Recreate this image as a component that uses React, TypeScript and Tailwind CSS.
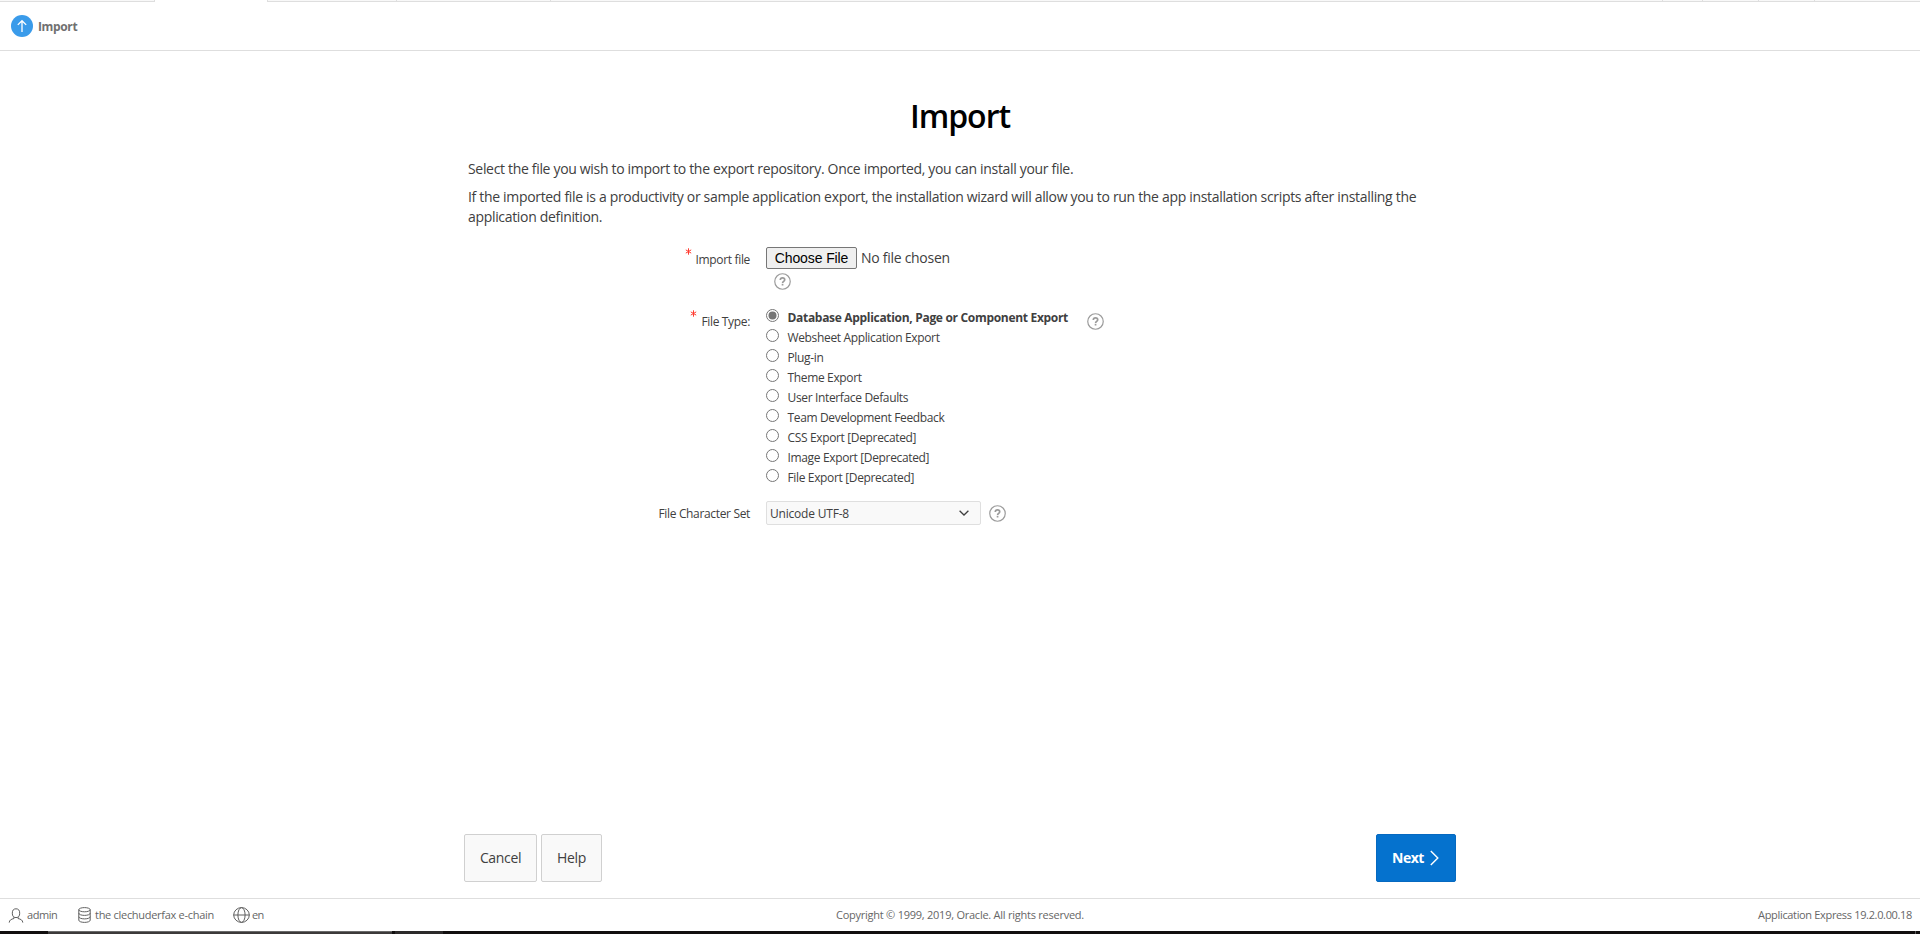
import { useState } from "react";

const FILE_TYPES = [
  "Database Application, Page or Component Export",
  "Websheet Application Export",
  "Plug-in",
  "Theme Export",
  "User Interface Defaults",
  "Team Development Feedback",
  "CSS Export [Deprecated]",
  "Image Export [Deprecated]",
  "File Export [Deprecated]",
];

function HelpIcon() {
  return (
    <svg width="17" height="17" viewBox="0 0 17 17" fill="none" className="block text-[#9b9b9b]">
      <circle cx="8.5" cy="8.5" r="7.75" stroke="currentColor" strokeWidth="1.2" />
      <path
        d="M6.3 7c0-1.3.9-2.1 2.2-2.1s2.2.8 2.2 1.9c0 1.5-2.1 1.6-2.1 3.1"
        stroke="currentColor"
        strokeWidth="1.7"
      />
      <rect x="7.7" y="10.8" width="1.7" height="1.7" fill="currentColor" />
    </svg>
  );
}

function Required() {
  return (
    <svg width="7" height="7" viewBox="0 0 7 7" className="block text-[#ff3b30]">
      <path d="M3.5 .3v6.4M.8 1.9l5.4 3.2M6.2 1.9L.8 5.1" stroke="currentColor" strokeWidth="1" />
    </svg>
  );
}

function Radio({ checked }: { checked: boolean }) {
  return (
    <svg width="13" height="13" viewBox="0 0 13 13" className="block">
      <circle cx="6.5" cy="6.5" r="6" fill="#fff" stroke="#767676" />
      {checked && <circle cx="6.5" cy="6.5" r="4" fill="#767676" />}
    </svg>
  );
}

function TabStrip() {
  return (
    <div className="flex h-[2px] shrink-0">
      <div className="w-[155px] border-r border-b border-[#dedede] bg-[#f8f8f8]" />
      <div className="w-[112px] bg-white" />
      <div className="w-[130px] border-r border-b border-l border-[#dedede] bg-[#f8f8f8]" />
      <div className="w-[154px] border-r border-b border-[#dedede] bg-[#f8f8f8]" />
      <div className="w-[1112px] border-r border-b border-[#dedede] bg-[#f8f8f8]" />
      <div className="w-[40px] border-r border-b border-[#dedede] bg-[#f8f8f8]" />
      <div className="w-[56px] border-r border-b border-[#dedede] bg-[#f8f8f8]" />
      <div className="w-[56px] border-r border-b border-[#dedede] bg-[#f8f8f8]" />
      <div className="flex-1 border-b border-[#dedede] bg-[#f8f8f8]" />
    </div>
  );
}

export default function App() {
  const [selected, setSelected] = useState(0);

  return (
    <div className="flex h-[934px] flex-col overflow-hidden bg-white font-['Open_Sans',sans-serif] text-[#404040]">
      <TabStrip />
      <header className="flex h-[49px] shrink-0 items-start border-b border-[#dedede] pl-[11px]">
        <svg width="22" height="22" viewBox="0 0 22 22" className="mt-[13px] block">
          <circle cx="11" cy="11" r="11" fill="#3a9bea" />
          <path d="M11 17V6M6.8 9.9L11 5.7l4.2 4.2" stroke="#fff" strokeWidth="1.3" fill="none" />
        </svg>
        <span className="mt-[15px] ml-[5px] text-xs leading-5 font-bold tracking-[-0.36px] text-[#707070]">
          Import
        </span>
      </header>

      <main className="mx-auto flex w-[992px] flex-1 flex-col pt-[45px]">
        <h1 className="text-center text-[32px] leading-10 font-semibold tracking-[-1px] text-black">Import</h1>
        <div className="mt-[23px] px-1 text-sm leading-5 tracking-[-0.323px]">
          <p>Select the file you wish to import to the export repository. Once imported, you can install your file.</p>
          <p className="mt-2">
            If the imported file is a productivity or sample application export, the installation wizard will allow you
            to run the app installation scripts after installing the application definition.
          </p>
        </div>

        <form className="mt-[20px] flex flex-col text-xs leading-5 tracking-[-0.34px]">
          <div className="flex h-[60px]">
            <div className="flex w-[286px] justify-end gap-[4px]">
              <span className="pt-[1px]">
                <Required />
              </span>
              <label className="pt-[3px]">Import file</label>
            </div>
            <div className="ml-[16px]">
              <div className="flex items-center gap-[4px]">
                <button
                  type="button"
                  className="h-[22px] w-[91px] rounded-[2px] border border-[#767676] bg-[#efefef] font-['Liberation_Sans',Arial,sans-serif] text-sm leading-5 tracking-[-0.1px] text-black"
                >
                  Choose File
                </button>
                <span className="text-sm leading-[22px] tracking-[-0.28px]">No file chosen</span>
              </div>
              <div className="mt-[4px] ml-[8px]">
                <HelpIcon />
              </div>
            </div>
          </div>

          <div className="flex h-[194px]">
            <div className="flex w-[286px] justify-end gap-[4px]">
              <span className="pt-[3px]">
                <Required />
              </span>
              <label className="pt-[5px]">File Type:</label>
            </div>
            <div className="ml-[16px]">
              {FILE_TYPES.map((name, i) => (
                <label key={name} className="flex h-5 items-start" onClick={() => setSelected(i)}>
                  <span className="mt-[2px]">
                    <Radio checked={i === selected} />
                  </span>
                  <span
                    className={
                      i === selected
                        ? "ml-[8.5px] leading-[22px] font-bold tracking-[-0.31px]"
                        : "ml-[8.5px] leading-[22px] tracking-[-0.35px]"
                    }
                  >
                    {name}
                  </span>
                </label>
              ))}
            </div>
            <div className="mt-[6px] ml-[19px]">
              <HelpIcon />
            </div>
          </div>

          <div className="flex h-6">
            <label className="w-[286px] pt-[3px] text-right">File Character Set</label>
            <div className="ml-[16px] flex w-[215px] items-center justify-between rounded-[2px] border border-[#dfdfdf] bg-[#f9f9f9] pr-[11px] pl-[3px]">
              <span className="pt-[2px] tracking-[-0.2px]">Unicode UTF-8</span>
              <svg width="10" height="6" viewBox="0 0 10 6" className="block">
                <path d="M.6 .7L5 5 9.4 .7" stroke="#404040" strokeWidth="1.3" fill="none" />
              </svg>
            </div>
            <div className="mt-[4px] ml-[8px]">
              <HelpIcon />
            </div>
          </div>
        </form>

        <div className="mt-auto mb-[16px] flex gap-1 text-sm leading-5">
          <button className="h-12 w-[73px] rounded-[2px] border border-[#d0d0d0] bg-[#f9f9f9] tracking-[-0.35px]">
            Cancel
          </button>
          <button className="h-12 w-[61px] rounded-[2px] border border-[#d0d0d0] bg-[#f9f9f9] tracking-[-0.35px]">
            Help
          </button>
          <button className="ml-auto flex h-12 w-[80px] items-center rounded-[2px] border border-[#0669c0] bg-[#0572ce] pl-[15px] font-bold tracking-[-0.5px] text-white">
            Next
            <svg width="9" height="16" viewBox="0 0 9 16" className="ml-[6px] block">
              <path d="M.8 .9L7.8 8l-7 7.1" stroke="#fff" strokeWidth="1.4" fill="none" />
            </svg>
          </button>
        </div>
      </main>

      <footer className="grid h-[33px] shrink-0 grid-cols-3 border-t border-[#dedede] px-2 pt-[6px] text-[11px] leading-5 text-[#666]">
        <div className="flex">
          <svg width="16" height="16" viewBox="0 0 16 16" className="mt-[3px] block" fill="none" stroke="#606060">
            <ellipse cx="8" cy="5.2" rx="3.7" ry="4.4" />
            <path d="M1.2 14.6c.2-2.6 2-3.4 4.8-4.1V8.9M14.8 14.6c-.2-2.6-2-3.4-4.8-4.1V8.9" />
          </svg>
          <span className="ml-[3px] w-[31px] tracking-[-0.45px]">admin</span>
          <svg width="13" height="16" viewBox="0 0 13 16" className="mt-[2px] ml-[20px] block" fill="none" stroke="#606060">
            <ellipse cx="6.5" cy="2.7" rx="5.7" ry="2.1" />
            <path d="M.8 2.7v10.5c0 1.2 2.5 2.2 5.7 2.2s5.7-1 5.7-2.2V2.7M.8 6.2c0 1.2 2.5 2.2 5.7 2.2s5.7-1 5.7-2.2M.8 9.7c0 1.2 2.5 2.2 5.7 2.2s5.7-1 5.7-2.2" />
          </svg>
          <span className="ml-[4px] w-[120px] tracking-[-0.29px] whitespace-nowrap">the clechuderfax e-chain</span>
          <svg width="17" height="16" viewBox="0 0 17 16" className="mt-[2px] ml-[18px] block" fill="none" stroke="#606060">
            <ellipse cx="8.5" cy="8" rx="7.8" ry="7.4" />
            <ellipse cx="8.5" cy="8" rx="3.6" ry="7.4" />
            <path d="M.5 8h16" />
          </svg>
          <span className="ml-[2px] tracking-[-0.6px]">en</span>
        </div>
        <div className="text-center tracking-[-0.245px]">Copyright © 1999, 2019, Oracle. All rights reserved.</div>
        <div className="text-right tracking-[-0.34px]">Application Express 19.2.0.00.18</div>
      </footer>
      <div className="flex h-[3px] shrink-0 bg-[#110f0f]">
        <div className="ml-[48px] h-[3px] w-[344px] border-t border-[#6a6a6a] bg-[#3c3a3a]" />
        <div className="ml-[3px] h-[3px] w-[48px] bg-[#2c2a2a]" />
        <div className="mr-[4px] ml-auto h-[3px] w-px bg-[#5a5a5a]" />
      </div>
    </div>
  );
}
